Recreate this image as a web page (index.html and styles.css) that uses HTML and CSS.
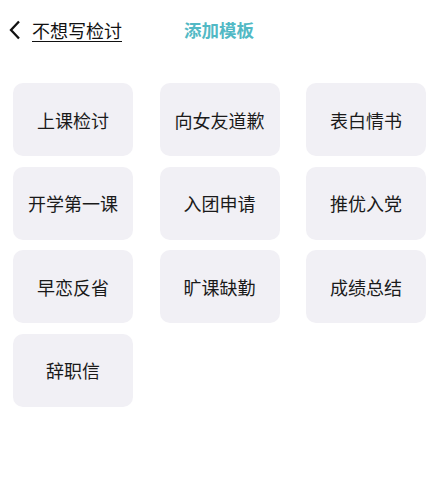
FILE: index.html
```html
<!DOCTYPE HTML>
<html>
<head>
<title>不想写检讨</title>
<meta name="viewport" content="width=device-width, initial-scale=1">
<link rel="stylesheet" href="styles.css">
</head>
<body>
<div class="topbar">
	<a class="back" href="#">
		<svg class="chevron" width="13" height="20" viewBox="0 0 13 20"><path d="M11 1.5 L3 10 L11 18.5" fill="none" stroke="#111" stroke-width="2.3" stroke-linejoin="miter"/></svg>
		<span class="title">不想写检讨</span>
	</a>
	<span class="add">添加模板</span>
</div>
<div class="grid">
	<div class="card">上课检讨</div>
	<div class="card">向女友道歉</div>
	<div class="card">表白情书</div>
	<div class="card">开学第一课</div>
	<div class="card">入团申请</div>
	<div class="card">推优入党</div>
	<div class="card">早恋反省</div>
	<div class="card">旷课缺勤</div>
	<div class="card">成绩总结</div>
	<div class="card">辞职信</div>
</div>
</body>
</html>
```

FILE: styles.css
```css
body{
	margin:0;
	background:#fff;
	font-family:"Noto Sans CJK SC", "Noto Sans", sans-serif;
	color:#1a1a1a;
}
.topbar{
	display:flex;
	align-items:center;
	height:59px;
	padding:0 0 0 8px;
}
.back{
	display:flex;
	align-items:center;
	color:#111;
	text-decoration:none;
	width:176px;
}
.chevron{ margin-right:11px; }
.title{
	font-size:18px;
	text-decoration:underline;
	text-underline-offset:3px;
	text-decoration-thickness:1px;
}
.add{
	font-size:17.5px;
	font-weight:bold;
	color:#52b9c5;
}
.grid{
	display:grid;
	grid-template-columns:repeat(3, 120px);
	column-gap:26.5px;
	row-gap:10.5px;
	padding:24px 13px 0;
}
.card{
	height:73px;
	background:#f1f0f5;
	border-radius:10px;
	display:flex;
	align-items:center;
	justify-content:center;
	font-size:18px;
}
```
